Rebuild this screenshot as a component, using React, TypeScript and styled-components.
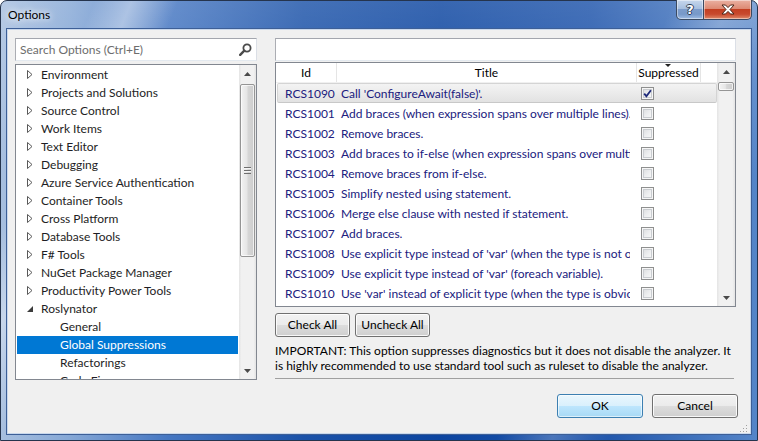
import React from "react";
import styled, { createGlobalStyle } from "styled-components";

const FONT = `Lato, "Open Sans", "Liberation Sans", sans-serif`;

const GlobalStyle = createGlobalStyle`
  html, body { margin: 0; padding: 0; }
  body {
    width: 758px; height: 441px; overflow: hidden;
    font-family: ${FONT}; font-size: 12px; background: #ffffff;
  }
  * { box-sizing: border-box; }
`;

const Window = styled.div`
  position: relative;
  width: 758px;
  height: 441px;
  display: flex;
  flex-direction: column;
  padding: 0 6px 6px;
  border: 1px solid #25344d;
  border-radius: 7px 7px 0 0;
  background:
    linear-gradient(112deg, rgba(255,255,255,0) 10%, rgba(255,255,255,0.38) 14%, rgba(255,255,255,0) 19%, rgba(255,255,255,0) 72%, rgba(255,255,255,0.22) 78%, rgba(255,255,255,0) 84%),
    linear-gradient(180deg, rgba(255,255,255,0.18) 0%, rgba(255,255,255,0) 40%),
    linear-gradient(90deg, #a7bfdf 0%, #86a8d6 9%, #4677c2 22%, #1b52a8 40%, #0c45a0 58%, #1d53aa 78%, #5585c8 100%);
`;

const TitleBar = styled.div`
  height: 28px;
  display: flex;
  align-items: flex-start;
`;

const Title = styled.div`
  padding: 6px 0 0 1px;
  font-size: 12px;
  color: #000;
  text-shadow: 0 0 6px rgba(255, 255, 255, 0.95), 0 0 10px rgba(255, 255, 255, 0.8);
`;

const CaptionButtons = styled.div`
  margin-left: auto;
  margin-top: -1px;
  margin-right: -1px;
  display: flex;
`;

const CaptionButton = styled.div<{ $variant: "help" | "close" }>`
  width: ${(p) => (p.$variant === "close" ? 48 : 28)}px;
  height: 20px;
  display: flex;
  align-items: center;
  justify-content: center;
  border: 1px solid #3a4a62;
  border-top: none;
  ${(p) =>
    p.$variant === "close"
      ? `
    border-left: none;
    border-radius: 0 0 5px 0;
    background: linear-gradient(180deg, #eab1a2 0%, #dd8a74 45%, #c33f22 50%, #c84a2e 75%, #df8a6a 100%);
  `
      : `
    border-radius: 0 0 0 5px;
    background: linear-gradient(180deg, #c7d7ec 0%, #a7bfdf 45%, #7d9ccb 50%, #7799c9 75%, #9fbce4 100%);
  `}
  box-shadow: inset 0 0 0 1px rgba(255, 255, 255, 0.45);
`;

const HelpGlyph = styled.span`
  font-family: "DejaVu Sans", sans-serif;
  font-weight: bold;
  font-size: 13px;
  line-height: 1;
  color: #fff;
  text-shadow: 1px 0 0 #2f3d55, -1px 0 0 #2f3d55, 0 1px 0 #2f3d55, 0 -1px 0 #2f3d55;
`;

const Client = styled.div`
  position: relative;
  flex: 1;
  display: flex;
  gap: 18px;
  padding: 8px 14px 0 7px;
  background: #f0f0f0;
  border: 1px solid #c9d8ec;
  box-shadow: 0 0 0 1px #3d5f97;
  color: #000;
`;

const LeftColumn = styled.div`
  width: 242px;
  display: flex;
  flex-direction: column;
  gap: 3px;
`;

const RightColumn = styled.div`
  flex: 1;
  display: flex;
  flex-direction: column;
`;

const TextInput = styled.div`
  height: 23px;
  background: #fff;
  border: 1px solid #abadb3;
  border-top-color: #a3a6ae;
  border-bottom-color: #e3e9ef;
  border-right-color: #dbdfe6;
  display: flex;
  align-items: center;
  padding: 0 4px 1px 4px;
`;

const Placeholder = styled.span`
  flex: 1;
  color: #6d6d6d;
`;

const TreeBox = styled.div`
  height: 316px;
  background: #fff;
  border: 1px solid #828790;
  display: flex;
  overflow: hidden;
`;

const TreeRows = styled.div`
  flex: 1;
  display: flex;
  flex-direction: column;
  padding-top: 1px;
  overflow: hidden;
`;

const TreeRow = styled.div<{ $level: number; $selected?: boolean }>`
  flex: none;
  height: 18px;
  margin: 0 1px;
  display: flex;
  align-items: center;
  padding-left: ${(p) => 9 + p.$level * 19}px;
  padding-bottom: 1px;
  white-space: nowrap;
  color: ${(p) => (p.$selected ? "#ffffff" : "#1e1e24")};
  background: ${(p) => (p.$selected ? "#0078d4" : "transparent")};
`;

const Expander = styled.span`
  width: 15px;
  flex: none;
  display: flex;
  align-items: center;
  padding-left: 1px;
`;

const ScrollBar = styled.div<{ $width: number }>`
  width: ${(p) => p.$width}px;
  flex: none;
  display: flex;
  flex-direction: column;
  background: linear-gradient(90deg, #e4e4e4 0%, #f1f1f1 15%, #f1f1f1 85%, #e4e4e4 100%);
`;

const ScrollArrow = styled.div`
  height: 17px;
  flex: none;
  display: flex;
  align-items: center;
  justify-content: center;
`;

const ScrollTrack = styled.div`
  flex: 1;
  display: flex;
  flex-direction: column;
`;

const Thumb = styled.div<{ $offset: number; $size: number }>`
  margin: ${(p) => p.$offset}px 1px 0;
  height: ${(p) => p.$size}px;
  flex: none;
  border: 1px solid #959595;
  border-radius: 2px;
  background: linear-gradient(90deg, #f3f3f3 0%, #e6e6e6 45%, #d6d6d6 55%, #cdcdcd 100%);
  box-shadow: inset 0 0 0 1px rgba(255, 255, 255, 0.7);
  display: flex;
  align-items: center;
  justify-content: center;
`;

const Grip = styled.div`
  width: 7px;
  height: 7px;
  background: repeating-linear-gradient(180deg, #6f6f6f 0 1px, #f5f5f5 1px 2px, transparent 2px 3px);
`;

const Grid = styled.div`
  height: 245px;
  margin-top: 1px;
  background: #fff;
  border: 1px solid #828790;
  display: flex;
  overflow: hidden;
`;

const Table = styled.div`
  flex: 1;
  display: flex;
  flex-direction: column;
  overflow: hidden;
`;

const HeaderRow = styled.div`
  height: 20px;
  flex: none;
  display: grid;
  grid-template-columns: 61px 300px 64px 1fr;
  border-bottom: 1px solid #f0f0f0;
`;

const HeaderCell = styled.div`
  position: relative;
  display: flex;
  align-items: center;
  justify-content: center;
  padding-bottom: 1px;
  border-right: 1px solid #e5e5e5;
  color: #000;
  white-space: nowrap;
  &:last-child { border-right: none; }
`;

const SortArrow = styled.span`
  position: absolute;
  top: 1px;
  left: 28px;
  width: 0;
  height: 0;
  border-left: 3px solid transparent;
  border-right: 3px solid transparent;
  border-top: 3px solid #222;
`;

const DataRow = styled.div<{ $selected?: boolean }>`
  height: 20px;
  flex: none;
  display: grid;
  grid-template-columns: 59px 300px 64px 1fr;
  align-items: center;
  margin: 0 0 0 1px;
  border: 1px solid ${(p) => (p.$selected ? "#d4d4d4" : "transparent")};
  border-bottom-color: ${(p) => (p.$selected ? "#c8c8c8" : "transparent")};
  border-radius: 2px;
  background: ${(p) =>
    p.$selected ? "linear-gradient(180deg, #f3f3f3 0%, #ebebeb 50%, #e2e2e2 100%)" : "transparent"};
  color: #20207e;
`;

const IdCell = styled.div`
  padding: 0 0 0 7px;
  white-space: nowrap;
  overflow: hidden;
`;

const TitleCell = styled.div`
  margin-right: 7px;
  padding-left: 4px;
  white-space: nowrap;
  overflow: hidden;
`;

const CheckCell = styled.div`
  padding-left: 4px;
  display: flex;
  align-items: center;
`;

const CheckBox = styled.span`
  width: 13px;
  height: 13px;
  border: 1px solid #8e8f8f;
  background: linear-gradient(135deg, #d8dadc 0%, #eeeff0 55%, #fafafa 100%);
  box-shadow: inset 0 0 0 1px #f6f6f6, inset 0 0 0 2px #c9ccd0;
  display: flex;
  align-items: center;
  justify-content: center;
`;

const ButtonRow = styled.div<{ $end?: boolean }>`
  display: flex;
  gap: ${(p) => (p.$end ? 9 : 5)}px;
  justify-content: ${(p) => (p.$end ? "flex-end" : "flex-start")};
  margin-top: ${(p) => (p.$end ? 15 : 6)}px;
  margin-right: ${(p) => (p.$end ? -2 : 0)}px;
`;

const Button = styled.div<{ $width: number; $height: number; $default?: boolean }>`
  width: ${(p) => p.$width}px;
  height: ${(p) => p.$height}px;
  display: flex;
  align-items: center;
  justify-content: center;
  padding-bottom: 1px;
  border: 1px solid ${(p) => (p.$default ? "#3c7fb1" : "#707070")};
  border-radius: 3px;
  color: #000;
  background: ${(p) =>
    p.$default
      ? "linear-gradient(180deg, #eaf6fd 0%, #d9f0fc 50%, #bee6fd 50%, #a7d9f5 100%)"
      : "linear-gradient(180deg, #f2f2f2 0%, #ebebeb 50%, #dddddd 50%, #cfcfcf 100%)"};
  box-shadow: inset 0 0 0 1px ${(p) => (p.$default ? "rgba(255,255,255,0.6)" : "rgba(255,255,255,0.85)")};
`;

const Notice = styled.div`
  margin-top: 6px;
  line-height: 15px;
  color: #000;
`;

const Separator = styled.div`
  margin: 5px 2px 0 0;
  height: 1px;
  background: #a0a0a0;
`;

const ResizeGrip = styled.div`
  position: absolute;
  right: 2px;
  bottom: 2px;
  width: 10px;
  height: 10px;
`;

const treeItems: { label: string; level: number; expanded?: boolean; leaf?: boolean; selected?: boolean }[] = [
  { label: "Environment", level: 0 },
  { label: "Projects and Solutions", level: 0 },
  { label: "Source Control", level: 0 },
  { label: "Work Items", level: 0 },
  { label: "Text Editor", level: 0 },
  { label: "Debugging", level: 0 },
  { label: "Azure Service Authentication", level: 0 },
  { label: "Container Tools", level: 0 },
  { label: "Cross Platform", level: 0 },
  { label: "Database Tools", level: 0 },
  { label: "F# Tools", level: 0 },
  { label: "NuGet Package Manager", level: 0 },
  { label: "Productivity Power Tools", level: 0 },
  { label: "Roslynator", level: 0, expanded: true },
  { label: "General", level: 1, leaf: true },
  { label: "Global Suppressions", level: 1, leaf: true, selected: true },
  { label: "Refactorings", level: 1, leaf: true },
  { label: "Code Fixes", level: 1, leaf: true },
];

const rules: { id: string; title: string; checked?: boolean }[] = [
  { id: "RCS1090", title: "Call 'ConfigureAwait(false)'.", checked: true },
  { id: "RCS1001", title: "Add braces (when expression spans over multiple lines)." },
  { id: "RCS1002", title: "Remove braces." },
  { id: "RCS1003", title: "Add braces to if-else (when expression spans over multiple lines)." },
  { id: "RCS1004", title: "Remove braces from if-else." },
  { id: "RCS1005", title: "Simplify nested using statement." },
  { id: "RCS1006", title: "Merge else clause with nested if statement." },
  { id: "RCS1007", title: "Add braces." },
  { id: "RCS1008", title: "Use explicit type instead of 'var' (when the type is not obvious)." },
  { id: "RCS1009", title: "Use explicit type instead of 'var' (foreach variable)." },
  { id: "RCS1010", title: "Use 'var' instead of explicit type (when the type is obvious)." },
];

const CollapsedIcon = () => (
  <svg width="6" height="9" viewBox="0 0 6 9">
    <polygon points="0.5,0.5 5,4.5 0.5,8.5" fill="#fff" stroke="#595959" strokeWidth="1" />
  </svg>
);

const ExpandedIcon = () => (
  <svg width="6" height="6" viewBox="0 0 6 6">
    <polygon points="6,0 6,6 0,6" fill="#3c3c3c" />
  </svg>
);

const ArrowUp = () => (
  <svg width="7" height="4" viewBox="0 0 7 4">
    <polygon points="3.5,0 7,4 0,4" fill="#4a4a4a" />
  </svg>
);

const ArrowDown = () => (
  <svg width="7" height="4" viewBox="0 0 7 4">
    <polygon points="0,0 7,0 3.5,4" fill="#4a4a4a" />
  </svg>
);

const SearchIcon = () => (
  <svg width="13" height="13" viewBox="0 0 13 13">
    <circle cx="8" cy="5" r="3.6" fill="none" stroke="#4b4b4b" strokeWidth="1.8" />
    <line x1="5.3" y1="7.7" x2="1.2" y2="11.8" stroke="#4b4b4b" strokeWidth="2.4" strokeLinecap="round" />
  </svg>
);

const CheckMark = () => (
  <svg width="9" height="9" viewBox="0 0 9 9">
    <path d="M1.2 4.6 L3.4 7.2 L7.9 1.2" fill="none" stroke="#1e2a7a" strokeWidth="1.8" />
  </svg>
);

const CloseGlyph = () => (
  <svg width="14" height="11" viewBox="0 0 14 11">
    <path
      d="M1 1 H4.5 L7 3.6 L9.5 1 H13 L9 5.5 L13 10 H9.5 L7 7.4 L4.5 10 H1 L5 5.5 Z"
      fill="#ffffff"
      stroke="#4a2418"
      strokeWidth="1"
      strokeLinejoin="round"
    />
  </svg>
);

const GripDots = () => (
  <svg width="10" height="10" viewBox="0 0 10 10">
    {[
      [8, 2],
      [8, 5],
      [5, 5],
      [8, 8],
      [5, 8],
      [2, 8],
    ].map(([x, y], i) => (
      <rect key={i} x={x} y={y} width="1" height="1" fill="#a0a0a0" />
    ))}
  </svg>
);

export default function App() {
  return (
    <>
      <GlobalStyle />
      <Window>
        <TitleBar>
          <Title>Options</Title>
          <CaptionButtons>
            <CaptionButton $variant="help">
              <HelpGlyph>?</HelpGlyph>
            </CaptionButton>
            <CaptionButton $variant="close">
              <CloseGlyph />
            </CaptionButton>
          </CaptionButtons>
        </TitleBar>
        <Client>
          <LeftColumn>
            <TextInput>
              <Placeholder>Search Options (Ctrl+E)</Placeholder>
              <SearchIcon />
            </TextInput>
            <TreeBox>
              <TreeRows>
                {treeItems.map((item) => (
                  <TreeRow key={item.label} $level={item.level} $selected={item.selected}>
                    <Expander>
                      {item.leaf ? null : item.expanded ? <ExpandedIcon /> : <CollapsedIcon />}
                    </Expander>
                    {item.label}
                  </TreeRow>
                ))}
              </TreeRows>
              <ScrollBar $width={17}>
                <ScrollArrow>
                  <ArrowUp />
                </ScrollArrow>
                <ScrollTrack>
                  <Thumb $offset={2} $size={173}>
                    <Grip />
                  </Thumb>
                </ScrollTrack>
                <ScrollArrow>
                  <ArrowDown />
                </ScrollArrow>
              </ScrollBar>
            </TreeBox>
          </LeftColumn>
          <RightColumn>
            <TextInput />
            <Grid>
              <Table>
                <HeaderRow>
                  <HeaderCell>Id</HeaderCell>
                  <HeaderCell>Title</HeaderCell>
                  <HeaderCell>
                    <SortArrow />
                    Suppressed
                  </HeaderCell>
                  <HeaderCell />
                </HeaderRow>
                {rules.map((r, i) => (
                  <DataRow key={r.id} $selected={i === 0}>
                    <IdCell>{r.id}</IdCell>
                    <TitleCell>{r.title}</TitleCell>
                    <CheckCell>
                      <CheckBox>{r.checked ? <CheckMark /> : null}</CheckBox>
                    </CheckCell>
                  </DataRow>
                ))}
              </Table>
              <ScrollBar $width={18}>
                <ScrollArrow>
                  <ArrowUp />
                </ScrollArrow>
                <ScrollTrack>
                  <Thumb $offset={2} $size={9} />
                </ScrollTrack>
                <ScrollArrow>
                  <ArrowDown />
                </ScrollArrow>
              </ScrollBar>
            </Grid>
            <ButtonRow>
              <Button $width={75} $height={24}>Check All</Button>
              <Button $width={75} $height={24}>Uncheck All</Button>
            </ButtonRow>
            <Notice>
              IMPORTANT: This option suppresses diagnostics but it does not disable the analyzer. It
              <br />
              is highly recommended to use standard tool such as ruleset to disable the analyzer.
            </Notice>
            <Separator />
            <ButtonRow $end>
              <Button $width={86} $height={24} $default>
                OK
              </Button>
              <Button $width={86} $height={24}>Cancel</Button>
            </ButtonRow>
          </RightColumn>
          <ResizeGrip>
            <GripDots />
          </ResizeGrip>
        </Client>
      </Window>
    </>
  );
}
